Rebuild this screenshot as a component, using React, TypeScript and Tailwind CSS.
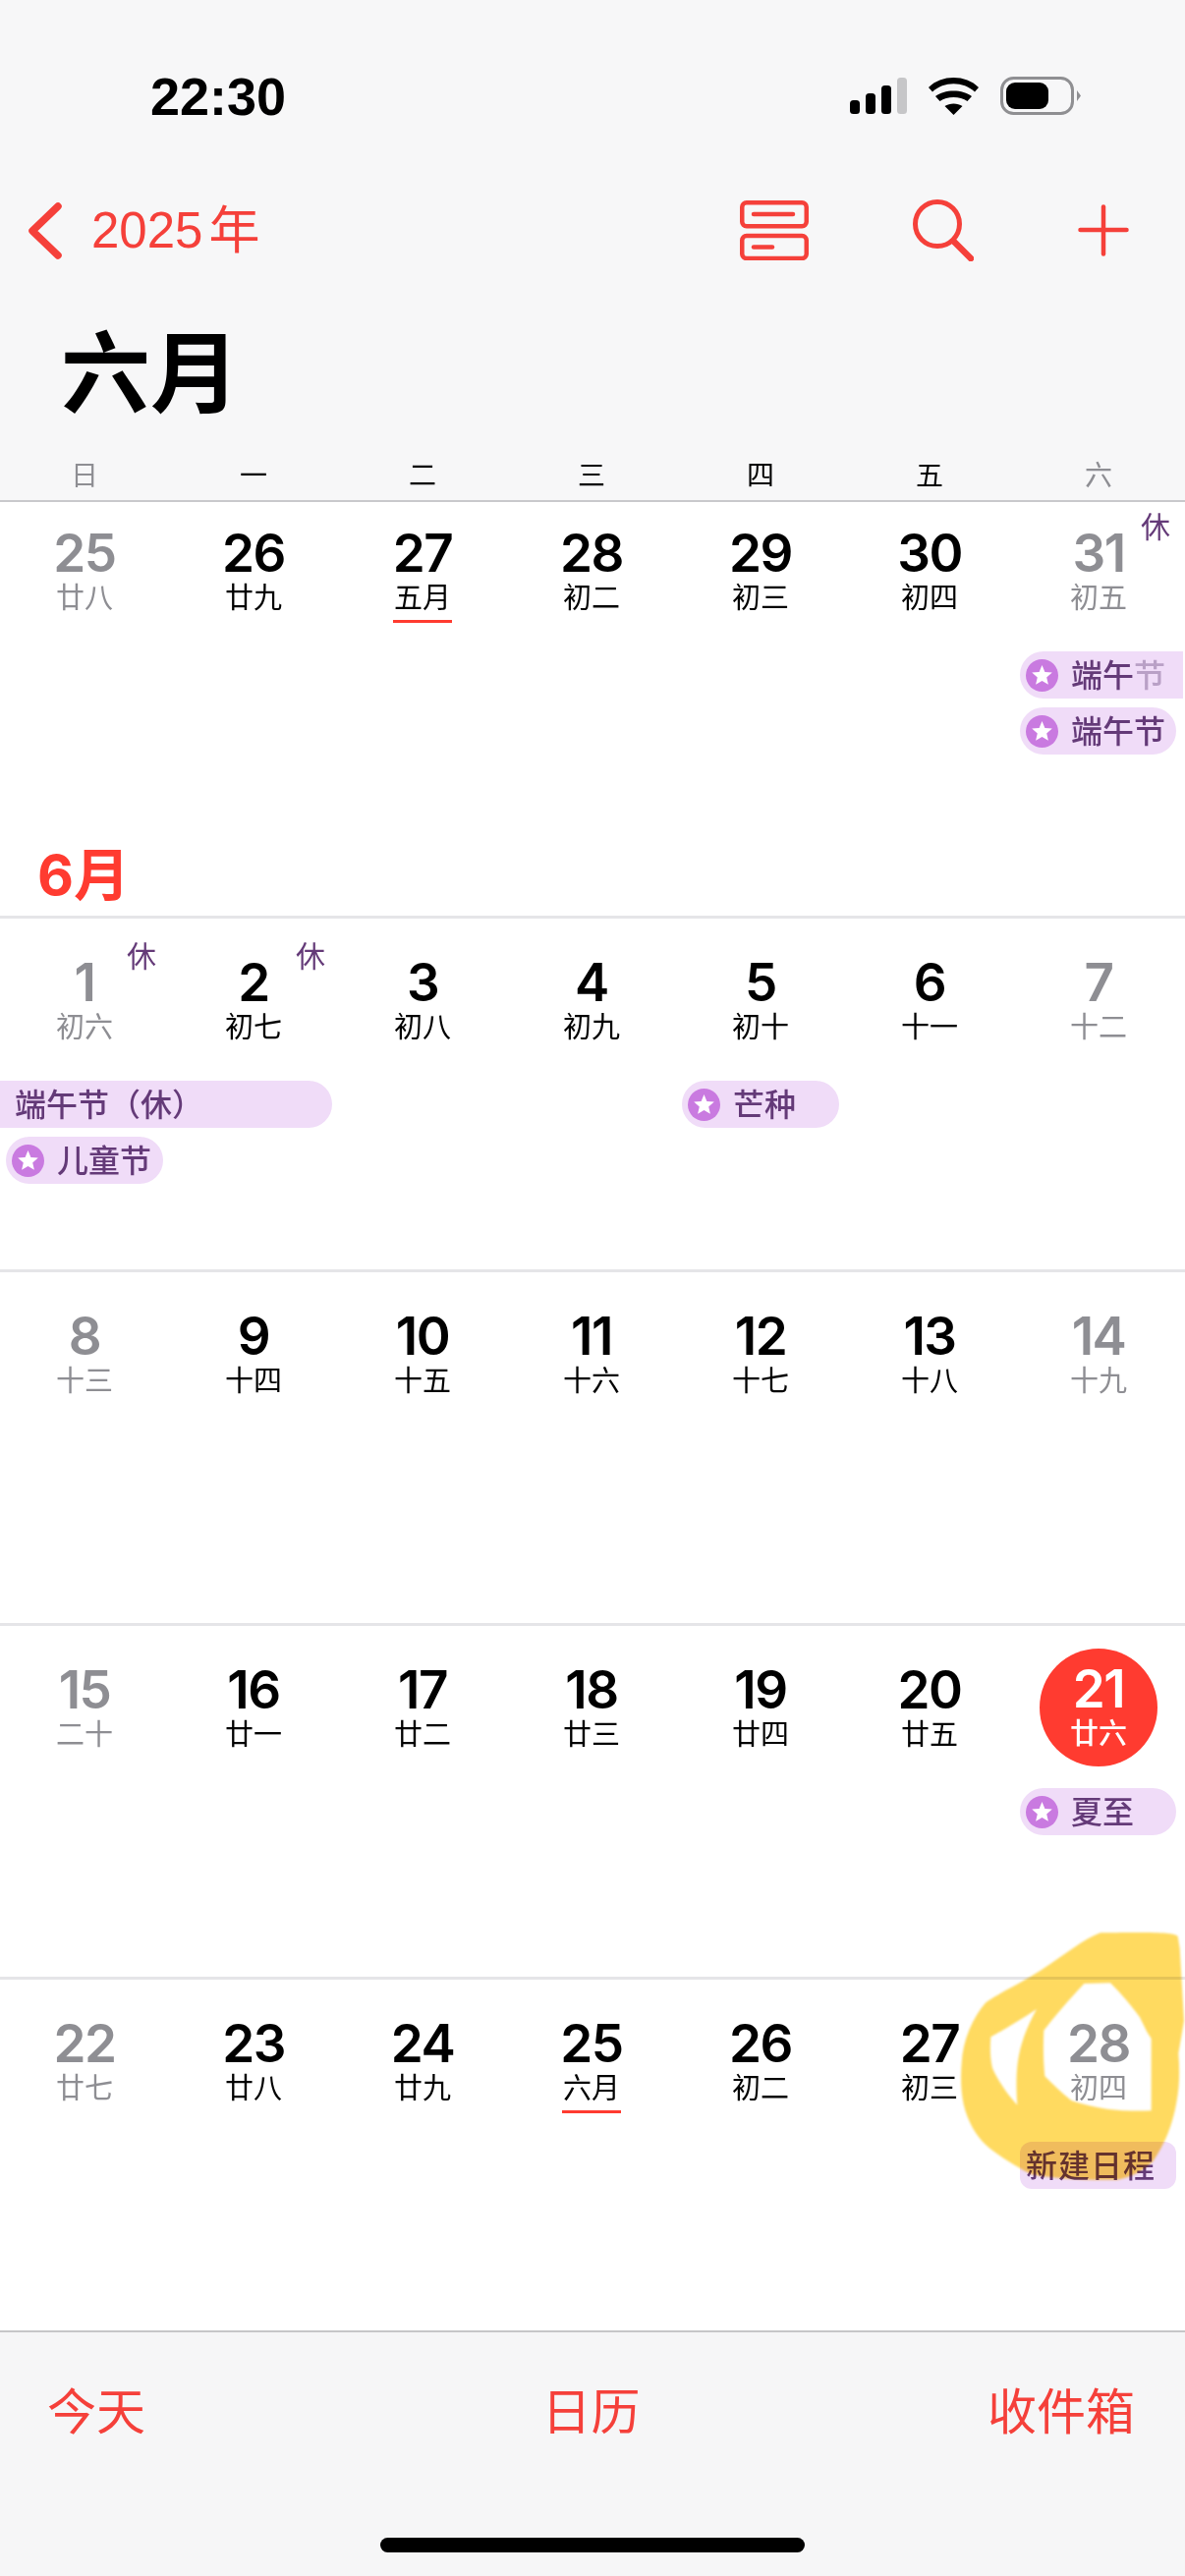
const FONT = "font-['Liberation_Sans','Noto_Sans_CJK_SC',sans-serif]";

type Day = {
  n: number;
  lunar: string;
  muted?: boolean;
  rest?: boolean;
  marker?: boolean;
  today?: boolean;
};

const weeks: Day[][] = [
  [
    { n: 25, lunar: "廿八", muted: true },
    { n: 26, lunar: "廿九" },
    { n: 27, lunar: "五月", marker: true },
    { n: 28, lunar: "初二" },
    { n: 29, lunar: "初三" },
    { n: 30, lunar: "初四" },
    { n: 31, lunar: "初五", muted: true, rest: true },
  ],
  [
    { n: 1, lunar: "初六", muted: true, rest: true },
    { n: 2, lunar: "初七", rest: true },
    { n: 3, lunar: "初八" },
    { n: 4, lunar: "初九" },
    { n: 5, lunar: "初十" },
    { n: 6, lunar: "十一" },
    { n: 7, lunar: "十二", muted: true },
  ],
  [
    { n: 8, lunar: "十三", muted: true },
    { n: 9, lunar: "十四" },
    { n: 10, lunar: "十五" },
    { n: 11, lunar: "十六" },
    { n: 12, lunar: "十七" },
    { n: 13, lunar: "十八" },
    { n: 14, lunar: "十九", muted: true },
  ],
  [
    { n: 15, lunar: "二十", muted: true },
    { n: 16, lunar: "廿一" },
    { n: 17, lunar: "廿二" },
    { n: 18, lunar: "廿三" },
    { n: 19, lunar: "廿四" },
    { n: 20, lunar: "廿五" },
    { n: 21, lunar: "廿六", today: true },
  ],
  [
    { n: 22, lunar: "廿七", muted: true },
    { n: 23, lunar: "廿八" },
    { n: 24, lunar: "廿九" },
    { n: 25, lunar: "六月", marker: true },
    { n: 26, lunar: "初二" },
    { n: 27, lunar: "初三" },
    { n: 28, lunar: "初四", muted: true },
  ],
];

const weekdays = ["日", "一", "二", "三", "四", "五", "六"];

function StatusIcons() {
  return (
    <div className="flex items-center">
      <svg width="58" height="37" viewBox="0 0 58 37" className="mr-[22px]">
        <rect x="0" y="23" width="10" height="14" rx="3.500" fill="#000" />
        <rect x="16" y="16" width="10" height="21" rx="3.500" fill="#000" />
        <rect x="32" y="8" width="10" height="29" rx="3.500" fill="#000" />
        <rect x="48" y="0" width="10" height="37" rx="3.500" fill="#c6c6c8" />
      </svg>
      <svg width="51" height="38" viewBox="0 0 51 38" className="mr-[22px]">
        <path d="M25.500 38 16.500 29C21.500 25.500 29.500 25.500 34.500 29Z" fill="#000" />
        <path d="M11.500 24 7 19C16 11.500 35 11.500 44 19L39.500 24C32 18.500 19 18.500 11.500 24Z" fill="#000" />
        <path d="M4 14.500 0 10C13 -3.300 38 -3.300 51 10L47 14.500C35.500 3.500 15.500 3.500 4 14.500Z" fill="#000" />
      </svg>
      <svg width="82" height="39" viewBox="0 0 82 39">
        <rect x="1.500" y="1.500" width="72" height="36" rx="12" fill="none" stroke="#8f8f92" strokeWidth="3" />
        <rect x="6" y="6" width="43" height="27" rx="9" fill="#000" />
        <path d="M78 14 82 19.500 78 25Z" fill="#8f8f92" />
      </svg>
    </div>
  );
}

function NavIcons() {
  return (
    <div className="flex items-center">
      <svg width="70" height="61" viewBox="0 0 70 61" fill="none" stroke="#f5403a" strokeWidth="4.500" strokeLinecap="round" className="mr-[106px]">
        <rect x="2.250" y="2.250" width="65.500" height="24" rx="4.500" />
        <rect x="2.250" y="36" width="65.500" height="23" rx="4.500" />
        <path d="M14 14H54" />
        <path d="M14 47.500H33" />
      </svg>
      <svg width="62" height="63" viewBox="0 0 62 63" fill="none" stroke="#f5403a" strokeWidth="5" strokeLinecap="round" className="mr-[106px]">
        <circle cx="25" cy="25" r="22.500" />
        <path d="M42 43 59 60" strokeWidth="6.500" />
      </svg>
      <svg width="52" height="53" viewBox="0 0 52 53" fill="none" stroke="#f5403a" strokeWidth="4.500" strokeLinecap="round">
        <path d="M26 2.500V50.500" />
        <path d="M2.500 26H49.500" />
      </svg>
    </div>
  );
}

function StarDot() {
  return (
    <svg width="33" height="33" viewBox="0 0 33 33" className="shrink-0">
      <circle cx="16.500" cy="16.500" r="16.500" fill="#c97ae0" />
      <path
        d="M16.500 6 19.400 13 26.800 13.600 21.200 18.500 22.900 25.800 16.500 22 10.100 25.800 11.800 18.500 6.200 13.600 13.600 13Z"
        fill="#fff"
      />
    </svg>
  );
}

function Pill({ label, className, fade = false }: { label: string; className: string; fade?: boolean }) {
  return (
    <div className={"flex h-[48px] items-center bg-[#f0dcf8] pl-[6px] text-[32px] font-medium leading-none text-[#643a78] " + className}>
      <StarDot />
      <span className="ml-[13px] whitespace-nowrap pt-[2px]">
        {fade ? (
          <>
            {label.slice(0, 2)}
            <span className="text-[#b9a0c6]">{label.slice(2)}</span>
          </>
        ) : (
          label
        )}
      </span>
    </div>
  );
}

function DayCell({ day }: { day: Day }) {
  const color = day.today ? "text-white" : day.muted ? "text-[#8e8e93]" : "text-black";
  return (
    <div className="relative row-start-1 mb-[13px] flex h-[120px] flex-col items-center">
      <div className={"flex h-[120px] w-[120px] flex-col items-center rounded-full " + (day.today ? "bg-[#ff3b30] pt-[22px]" : "pt-[23px]")}>
        <span className={"font-['Inter',sans-serif] text-[53px] font-semibold leading-[39px] tracking-[-1.500px] " + color}>
          {day.n}
        </span>
        <span className={"mt-[11px] text-[29px] leading-[30px] " + color + (day.today ? " font-medium" : "")}>
          {day.lunar}
        </span>
        {day.marker && <span className="mt-[7px] h-[3px] w-[60px] bg-[#ff3b30]" />}
      </div>
      {day.rest && <span className="absolute right-[13px] top-[1px] text-[30px] leading-[30px] text-[#643a78]">休</span>}
    </div>
  );
}

function WeekGrid({ days, className, children }: { days: Day[]; className: string; children?: React.ReactNode }) {
  return (
    <div className={"grid grid-cols-7 content-start gap-y-[9px] pr-[2px] " + className}>
      {days.map((d) => (
        <DayCell key={d.n} day={d} />
      ))}
      {children}
    </div>
  );
}

// hand-drawn marker scribble round the 28th, traced as an outline with two holes
function Highlight() {
  return (
    <svg
      width="246"
      height="290"
      viewBox="0 0 738 870"
      className="pointer-events-none absolute left-[960px] top-[1950px] mix-blend-multiply blur-[1px]"
    >
      <path
        fill="#ffda60"
        fillRule="evenodd"
        d="M716 62C700 50 640 50 480 52C430 70 370 120 300 165C240 205 170 235 130 265C90 310 60 380 56 450C52 500 55 540 62 575C75 630 100 670 130 700C170 735 230 770 270 790C350 805 450 808 530 806C570 800 610 780 640 750C675 700 700 640 712 570C722 520 722 470 718 420L735 320L722 100Z M145 370C190 345 240 315 285 285C255 340 235 390 227 450C222 490 223 540 226 578C195 545 165 500 150 465C142 430 143 400 145 370Z M430 207L510 205C545 240 575 275 600 310L622 355L635 375L635 595C590 597 540 595 500 590C460 585 425 575 392 565C360 540 335 515 310 490C305 440 305 395 307 350C345 300 390 250 430 207Z"
      />
    </svg>
  );
}

export default function App() {
  return (
    <div className={"relative flex h-[2622px] w-[1206px] flex-col overflow-hidden bg-white " + FONT}>
      <header className="flex h-[511px] flex-col border-b-2 border-[#c9c9cc] bg-[#f7f7f8]">
        <div className="flex h-[117px] items-end justify-between pl-[153px] pr-[106px]">
          <span className="text-[54px] font-bold leading-[38px] text-black">22:30</span>
          <StatusIcons />
        </div>
        <div className="mt-[86px] flex items-center justify-between pl-[28px] pr-[57px]">
          <div className="flex items-center">
            <svg width="36" height="58" viewBox="0 0 36 58" fill="none" stroke="#f5403a" strokeWidth="7.500" strokeLinecap="round" strokeLinejoin="round">
              <path d="M31 4 5 29 31 54" />
            </svg>
            <span className="ml-[29px] text-[51px] leading-[60px] text-[#f5403a]">2025</span>
            <span className="ml-[6px] text-[52px] leading-[60px] text-[#f5403a]">年</span>
          </div>
          <NavIcons />
        </div>
        <div className="mt-[70px] pl-[62px] text-[91px] font-bold leading-[92px] text-black">六月</div>
        <div className="mt-[42px] grid grid-cols-7 pr-[2px]">
          {weekdays.map((w, i) => (
            <span key={w} className={"text-center text-[28px] leading-[30px] " + (i === 0 || i === 6 ? "text-[#8e8e93]" : "text-black")}>
              {w}
            </span>
          ))}
        </div>
      </header>

      <main className="flex flex-1 flex-col">
        <div className="flex h-[421px] flex-col justify-between">
          <WeekGrid days={weeks[0]} className="pt-[10px]">
            <Pill label="端午节" fade className="col-start-7 row-start-2 ml-[6px] w-[166px] rounded-l-full" />
            <Pill label="端午节" className="col-start-7 row-start-3 ml-[6px] w-[159px] rounded-full" />
          </WeekGrid>
          <div className="mb-[11px] pl-[38px] font-['Inter','Noto_Sans_CJK_SC',sans-serif] text-[57px] font-bold leading-[60px] text-[#ff3b30]">
            6月
          </div>
        </div>

        <WeekGrid days={weeks[1]} className="h-[360px] border-t-[3px] border-[#e5e5e8] pt-[23px]">
          <div className="col-span-2 col-start-1 row-start-2 mr-[6px] flex h-[48px] items-center rounded-r-full bg-[#f0dcf8] pl-[15px] pt-[2px] text-[32px] font-medium leading-none text-[#643a78]">
            端午节（休）
          </div>
          <Pill label="儿童节" className="col-start-1 row-start-3 ml-[6px] w-[160px] rounded-full" />
          <Pill label="芒种" className="col-start-5 row-start-2 ml-[6px] w-[160px] rounded-full" />
        </WeekGrid>

        <WeekGrid days={weeks[2]} className="h-[360px] border-t-[3px] border-[#e5e5e8] pt-[23px]" />

        <WeekGrid days={weeks[3]} className="h-[360px] border-t-[3px] border-[#e5e5e8] pt-[23px]">
          <Pill label="夏至" className="col-start-7 row-start-2 ml-[6px] w-[159px] rounded-full" />
        </WeekGrid>

        <WeekGrid days={weeks[4]} className="h-[360px] border-t-[3px] border-[#e5e5e8] pt-[23px]">
          <div className="col-start-7 row-start-2 ml-[6px] flex h-[48px] w-[159px] items-center rounded-[12px] bg-[#f0dcf8] pl-[6px] pt-[2px] text-[32px] font-medium leading-none tracking-[1px] text-[#643a78]">
            新建日程
          </div>
        </WeekGrid>
      </main>

      <footer className="flex h-[250px] flex-col border-t-2 border-[#c6c6c8] bg-[#f6f6f7]">
        <div className="mt-[52px] grid grid-cols-3 pl-[48px] pr-[51px] text-[50px] leading-[60px] text-[#f5403a]">
          <span>今天</span>
          <span className="text-center">日历</span>
          <span className="text-right">收件箱</span>
        </div>
        <div className="mx-auto mt-[97px] h-[15px] w-[432px] rounded-full bg-black" />
      </footer>

      <Highlight />
    </div>
  );
}
